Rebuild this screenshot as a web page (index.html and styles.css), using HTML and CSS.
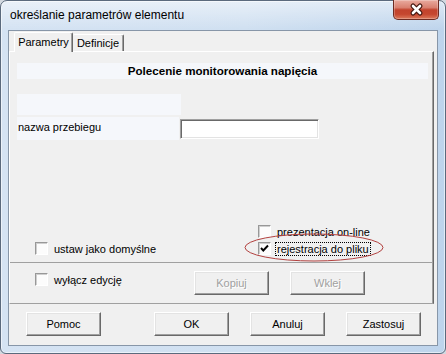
FILE: index.html
```html
<!DOCTYPE html>
<html>
  <head>
    <meta charset="utf-8">
    <title>określanie parametrów elementu</title>
    <link rel="stylesheet" href="styles.css">
  </head>
  <body>
    <div class="dlg_window">

      <div class="dlg_titlebar">
        <span class="dlg_title">określanie parametrów elementu</span>
        <div class="dlg_close">
          <svg width="44" height="19" viewBox="0 0 44 19">
            <path d="M19 6 L26 13 M26 6 L19 13" stroke="#43170f" stroke-width="5" stroke-linecap="round" fill="none"/>
            <path d="M19 6 L26 13 M26 6 L19 13" stroke="#ffffff" stroke-width="2.6" stroke-linecap="round" fill="none"/>
          </svg>
        </div>
      </div>

      <div class="dlg_client">
        <div class="dlg_tabs">
          <div class="dlg_tab dlg_tab_active">Parametry</div>
          <div class="dlg_tab dlg_tab_second">Definicje</div>
        </div>

        <div class="dlg_panel">
          <div class="dlg_main">
            <div class="dlg_caption">Polecenie monitorowania napięcia</div>
            <div class="dlg_blank"></div>
            <div class="dlg_field">
              <div class="dlg_field_label">nazwa przebiegu</div>
              <input class="dlg_field_input" type="text">
            </div>

            <div class="dlg_options">
              <div class="dlg_options_left">
                <div class="dlg_check_row">
                  <span class="dlg_check"></span>
                  <span class="dlg_check_label">ustaw jako domyślne</span>
                </div>
              </div>
              <div class="dlg_options_right">
                <div class="dlg_check_row">
                  <span class="dlg_check"></span>
                  <span class="dlg_check_label">prezentacja on-line</span>
                </div>
                <div class="dlg_check_row">
                  <span class="dlg_check">
                    <svg width="11" height="11" viewBox="0 0 11 11">
                      <polyline points="2,5 4.3,7.5 9,2.5" stroke="#000" stroke-width="1.9" fill="none"/>
                    </svg>
                  </span>
                  <span class="dlg_check_label dlg_focus">rejestracja do pliku</span>
                </div>
              </div>
            </div>
          </div>

          <div class="dlg_tools">
            <div class="dlg_tools_left">
              <div class="dlg_check_row">
                <span class="dlg_check"></span>
                <span class="dlg_check_label">wyłącz edycję</span>
              </div>
            </div>
            <button class="dlg_button" disabled>Kopiuj</button>
            <button class="dlg_button dlg_button_next" disabled>Wklej</button>
          </div>
        </div>

        <div class="dlg_buttons">
          <button class="dlg_button dlg_button_help">Pomoc</button>
          <button class="dlg_button">OK</button>
          <button class="dlg_button dlg_button_next">Anuluj</button>
          <button class="dlg_button dlg_button_next">Zastosuj</button>
        </div>
      </div>

      <!-- hand drawn mark over the dialog -->
      <svg class="dlg_mark" width="142" height="31" viewBox="0 0 142 31">
        <ellipse cx="71" cy="15.5" rx="69" ry="13.5" stroke="#b2413f" stroke-width="1" fill="none"/>
      </svg>
    </div>
  </body>
</html>
```

FILE: styles.css
```css
body
  {
  margin: 0;
  background: #d3d9e0;
  }

.dlg_window
  {
  position: relative;
  width: 446px;
  height: 354px;
  box-sizing: border-box;
  display: flex;
  flex-direction: column;
  border: 1px solid #5b6a7d;
  border-radius: 7px 7px 6px 6px;
  background:
    linear-gradient(180deg, rgba(255,255,255,0.5), rgba(255,255,255,0) 28px),
    linear-gradient(90deg, #d5e3f3, #d0e0f1 55%, #bed4ec);
  box-shadow: inset 0 0 0 1px rgba(255,255,255,0.55);
  font-family: "Liberation Sans", Arial, sans-serif;
  font-size: 11px;
  color: #000;
  }

/* title bar */

.dlg_titlebar
  {
  height: 29px;
  display: flex;
  align-items: flex-start;
  }

.dlg_title
  {
  margin: 7px 0 0 9px;
  font-size: 12px;
  line-height: 15px;
  }

.dlg_close
  {
  margin: -1px 6px 0 auto;
  width: 46px;
  height: 20px;
  box-sizing: border-box;
  border: 1px solid #6d2b22;
  border-top: none;
  border-radius: 0 0 5px 5px;
  background: linear-gradient(180deg, #e9ab9f 0%, #d98070 40%, #c2432d 52%, #c5472f 75%, #dc7a5c 100%);
  box-shadow: inset 0 0 0 1px rgba(255,255,255,0.25);
  display: flex;
  align-items: center;
  justify-content: center;
  }

/* client area */

.dlg_client
  {
  flex: 1;
  margin: 0 7px 7px 7px;
  background: #f0f0f0;
  border: 1px solid #8796a8;
  display: flex;
  flex-direction: column;
  }

.dlg_tabs
  {
  display: flex;
  align-items: flex-start;
  height: 19px;
  padding: 1px 0 0 5px;
  }

.dlg_tab
  {
  box-sizing: border-box;
  width: 51px;
  height: 17px;
  margin-top: 2px;
  border: 1px solid #fff;
  border-bottom: none;
  border-right-color: #696969;
  border-radius: 2px 2px 0 0;
  box-shadow: inset -1px 0 #a0a0a0;
  background: #f0f0f0;
  text-align: center;
  line-height: 16px;
  }

.dlg_tab_active
  {
  position: relative;
  z-index: 1;
  width: 59px;
  height: 20px;
  margin-top: 0;
  line-height: 18px;
  }

.dlg_tab_second
  {
  border-left: none;
  }

.dlg_panel
  {
  height: 253px;
  margin-right: 3px;
  box-sizing: border-box;
  border: 1px solid;
  border-color: #fff #696969 #a0a0a0 #fff;
  box-shadow: inset -1px 0 #a0a0a0;
  display: flex;
  flex-direction: column;
  }

.dlg_main
  {
  height: 210px;
  border-bottom: 1px solid #a0a0a0;
  display: flex;
  flex-direction: column;
  }

.dlg_caption
  {
  margin: 11px 5px 0 7px;
  height: 16px;
  line-height: 16px;
  background: #f5f7fb;
  text-align: center;
  font-size: 11.6px;
  font-weight: bold;
  }

.dlg_blank
  {
  margin: 15px 0 0 7px;
  width: 164px;
  height: 21px;
  background: #f5f7fb;
  }

.dlg_field
  {
  display: flex;
  align-items: flex-start;
  height: 23px;
  margin: 2px 0 0 7px;
  }

.dlg_field_label
  {
  width: 162px;
  height: 23px;
  box-sizing: border-box;
  padding: 3px 0 0 1px;
  line-height: 14px;
  background: #f5f7fb;
  }

.dlg_field_input
  {
  width: 139px;
  height: 20px;
  margin: 2px 0 0 1px;
  padding: 0 2px;
  box-sizing: border-box;
  border: 1px solid;
  border-color: #a0a0a0 #fff #fff #a0a0a0;
  box-shadow: inset 1px 1px #696969, inset -1px -1px #e3e3e3;
  background: #fff;
  font: inherit;
  outline: none;
  }

.dlg_options
  {
  margin-top: auto;
  display: flex;
  align-items: flex-end;
  padding: 0 0 5px 25px;
  }

.dlg_options_left
  {
  width: 223px;
  }

/* check boxes */

.dlg_check_row
  {
  display: flex;
  align-items: center;
  height: 17px;
  }

.dlg_check
  {
  width: 13px;
  height: 13px;
  box-sizing: border-box;
  margin-right: 4px;
  border: 1px solid;
  border-color: #989898 #fff #fff #989898;
  box-shadow: inset 1px 1px #cfcfcf;
  background: #fcfcfc;
  display: flex;
  align-items: center;
  justify-content: center;
  }

.dlg_check_label
  {
  padding: 0 1px;
  border: 1px dotted transparent;
  line-height: 12px;
  white-space: nowrap;
  }

.dlg_focus
  {
  border-color: #000;
  }

/* lower part of the page */

.dlg_tools
  {
  flex: 1;
  display: flex;
  align-items: flex-start;
  padding: 8px 0 0 25px;
  }

.dlg_tools_left
  {
  width: 159px;
  }

.dlg_button
  {
  width: 75px;
  height: 24px;
  padding: 0;
  box-sizing: border-box;
  border: 1px solid;
  border-color: #fff #696969 #696969 #fff;
  box-shadow: inset -1px -1px #a0a0a0, inset 1px 1px #e3e3e3;
  background: #f0f0f0;
  font: inherit;
  color: #000;
  }

.dlg_button:disabled
  {
  color: #a0a0a0;
  text-shadow: 1px 1px #fff;
  }

.dlg_button_next
  {
  margin-left: 21px;
  }

.dlg_buttons
  {
  display: flex;
  padding: 8px 0 0 17px;
  }

.dlg_button_help
  {
  margin-right: 53px;
  }

.dlg_mark
  {
  position: absolute;
  left: 242px;
  top: 231px;
  pointer-events: none;
  }
```
